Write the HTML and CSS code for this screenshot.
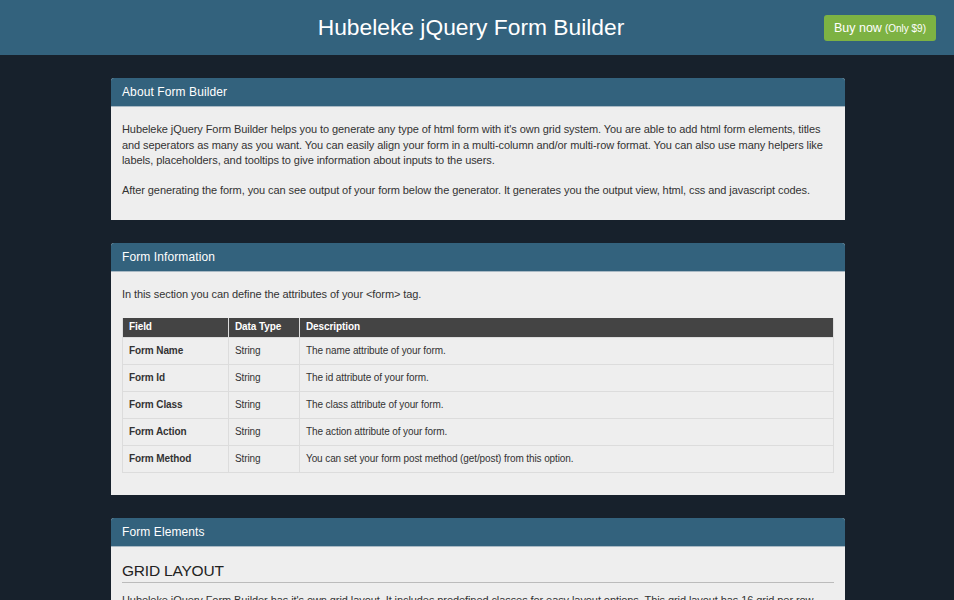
FILE: index.html
```html
<!DOCTYPE html>
<html lang="en">
<head>
    <meta charset="UTF-8">
    <title>Hubeleke jQuery Form Builder</title>
    <link rel="stylesheet" href="styles.css">
</head>
<body>

<div class="top-bar">
    <h1 class="top-title">Hubeleke jQuery Form Builder</h1>
    <a class="buy-button" href="#">Buy now <small>(Only $9)</small></a>
</div>

<div class="page">
    <div class="panel">
        <div class="panel-head">About Form Builder</div>
        <div class="panel-body about-body">
            <p>Hubeleke jQuery Form Builder helps you to generate any type of html form with it's own grid system. You are able to add html form elements, titles and seperators as many as you want. You can easily align your form in a multi-column and/or multi-row format. You can also use many helpers like labels, placeholders, and tooltips to give information about inputs to the users.</p>
            <p>After generating the form, you can see output of your form below the generator. It generates you the output view, html, css and javascript codes.</p>
        </div>
    </div>

    <div class="panel">
        <div class="panel-head">Form Information</div>
        <div class="panel-body info-body">
            <p>In this section you can define the attributes of your &lt;form&gt; tag.</p>
            <table class="attr-table">
                <thead>
                <tr>
                    <th class="col-field">Field</th>
                    <th class="col-type">Data Type</th>
                    <th>Description</th>
                </tr>
                </thead>
                <tbody>
                <tr>
                    <td class="field-name">Form Name</td>
                    <td>String</td>
                    <td>The name attribute of your form.</td>
                </tr>
                <tr>
                    <td class="field-name">Form Id</td>
                    <td>String</td>
                    <td>The id attribute of your form.</td>
                </tr>
                <tr>
                    <td class="field-name">Form Class</td>
                    <td>String</td>
                    <td>The class attribute of your form.</td>
                </tr>
                <tr>
                    <td class="field-name">Form Action</td>
                    <td>String</td>
                    <td>The action attribute of your form.</td>
                </tr>
                <tr>
                    <td class="field-name">Form Method</td>
                    <td>String</td>
                    <td>You can set your form post method (get/post) from this option.</td>
                </tr>
                </tbody>
            </table>
        </div>
    </div>

    <div class="panel">
        <div class="panel-head">Form Elements</div>
        <div class="panel-body elements-body">
            <h2 class="section-title">GRID LAYOUT</h2>
            <p>Hubeleke jQuery Form Builder has it's own grid layout. It includes predefined classes for easy layout options. This grid layout has 16 grid per row.</p>
        </div>
    </div>
</div>

</body>
</html>
```

FILE: styles.css
```css
body {
    margin: 0;
    background-color: #17212c;
    font-family: "Liberation Sans", Arial, sans-serif;
    color: #333;
}

.top-bar {
    position: relative;
    height: 55px;
    background-color: #33627d;
    display: flex;
    align-items: center;
    justify-content: center;
}

.top-title {
    margin: 0 0 0 -12px;
    font-size: 22.8px;
    font-weight: normal;
    color: #fff;
}

.buy-button {
    position: absolute;
    right: 18px;
    top: 15px;
    height: 26px;
    padding: 0 10px;
    display: flex;
    align-items: center;
    gap: 3px;
    background-color: #7db243;
    color: #fff;
    font-size: 12.5px;
    text-decoration: none;
    border-radius: 3px;
}

.buy-button small {
    font-size: 10px;
}

.page {
    width: 734px;
    margin-left: calc(50% - 366px);
    padding-top: 23px;
}

.panel {
    margin-bottom: 23px;
    background-color: #eee;
    border-radius: 3px 3px 0 0;
    overflow: hidden;
}

.panel-head {
    height: 28px;
    line-height: 28px;
    padding: 0 11px;
    background-color: #33627d;
    color: #fff;
    font-size: 12px;
    letter-spacing: 0.1px;
    border-bottom: 1px solid #a9b9c4;
}

.panel-body {
    padding: 15px 11px 8px;
    font-size: 11px;
    letter-spacing: -0.08px;
    line-height: 15.5px;
}

.panel-body p {
    margin: 0 0 14px;
}

.info-body {
    padding-bottom: 22px;
}

.info-body p {
    margin-bottom: 15px;
}

.attr-table {
    width: 100%;
    border-collapse: collapse;
    font-size: 10px;
    letter-spacing: -0.1px;
}

.attr-table th {
    height: 19px;
    padding: 0 6px;
    text-align: left;
    background-color: #444;
    color: #fff;
    border: 1px solid #ddd;
    border-top: none;
    border-bottom: none;
}

.attr-table td {
    height: 26px;
    padding: 0 6px;
    border: 1px solid #dcdcdc;
}

.col-field {
    width: 93px;
}

.col-type {
    width: 58px;
}

.field-name {
    font-weight: bold;
}

.section-title {
    margin: 0;
    padding-bottom: 3px;
    font-size: 15.5px;
    line-height: 17px;
    letter-spacing: -0.2px;
    font-weight: normal;
    color: #222;
    border-bottom: 1px solid #bbb;
}

.elements-body p {
    margin-top: 10px;
}
```
